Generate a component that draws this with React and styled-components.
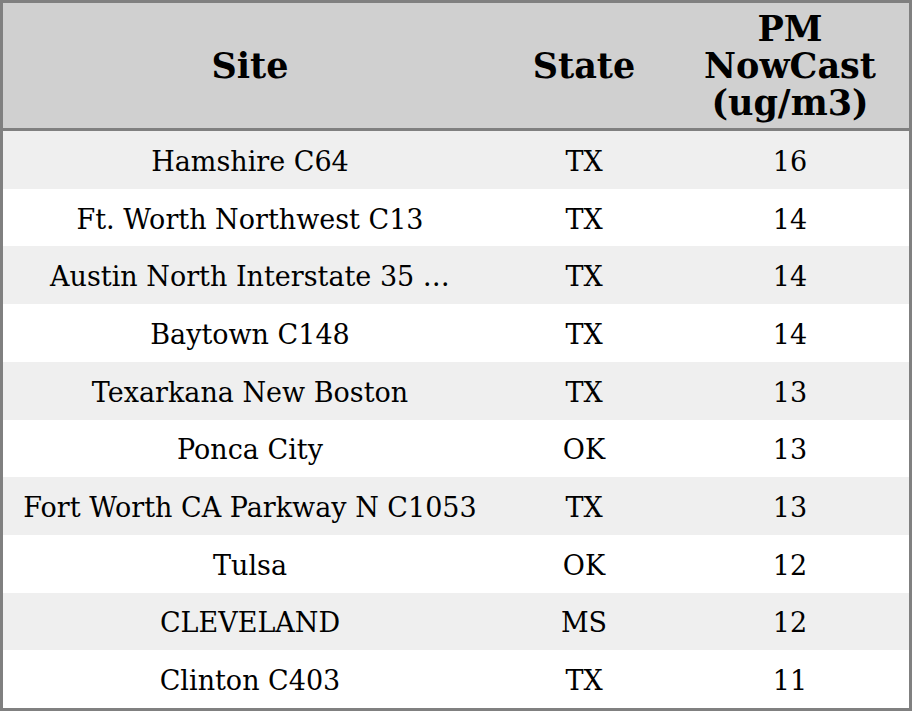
import React from 'react';
import styled, { createGlobalStyle } from 'styled-components';

const GlobalStyle = createGlobalStyle`
  html, body {
    margin: 0;
    padding: 0;
    background: #ffffff;
  }
`;

const rows = [
  { site: "Hamshire C64", state: "TX", pm: 16 },
  { site: "Ft. Worth Northwest C13", state: "TX", pm: 14 },
  { site: "Austin North Interstate 35 …", state: "TX", pm: 14 },
  { site: "Baytown C148", state: "TX", pm: 14 },
  { site: "Texarkana New Boston", state: "TX", pm: 13 },
  { site: "Ponca City", state: "OK", pm: 13 },
  { site: "Fort Worth CA Parkway N C1053", state: "TX", pm: 13 },
  { site: "Tulsa", state: "OK", pm: 12 },
  { site: "CLEVELAND", state: "MS", pm: 12 },
  { site: "Clinton C403", state: "TX", pm: 11 },
];

const Table = styled.div`
  box-sizing: border-box;
  width: 912px;
  height: 711px;
  border: 3px solid #808080;
  display: grid;
  grid-template-columns: 494px 174px 1fr;
  grid-template-rows: 128px repeat(10, 1fr);
  font-family: "DejaVu Serif", serif;
  color: #000;
`;

const HeadCell = styled.div`
  background: #d0d0d0;
  border-bottom: 3px solid #808080;
  display: flex;
  align-items: center;
  justify-content: center;
  text-align: center;
  font-weight: bold;
  font-size: 35px;
  line-height: 37px;
`;

const Cell = styled.div`
  background: ${props => props.$shaded ? "#efefef" : "#ffffff"};
  display: flex;
  align-items: center;
  justify-content: center;
  padding-top: 3px;
  font-size: 27px;
  white-space: nowrap;
  overflow: hidden;
`;

export default function App() {
  return (
    <>
      <GlobalStyle />
      <Table>
        <HeadCell>Site</HeadCell>
        <HeadCell>State</HeadCell>
        <HeadCell>PM<br />NowCast<br />(ug/m3)</HeadCell>
        {rows.map((r, i) => (
          <React.Fragment key={i}>
            <Cell $shaded={i % 2 === 0}>{r.site}</Cell>
            <Cell $shaded={i % 2 === 0}>{r.state}</Cell>
            <Cell $shaded={i % 2 === 0}>{r.pm}</Cell>
          </React.Fragment>
        ))}
      </Table>
    </>
  );
}
